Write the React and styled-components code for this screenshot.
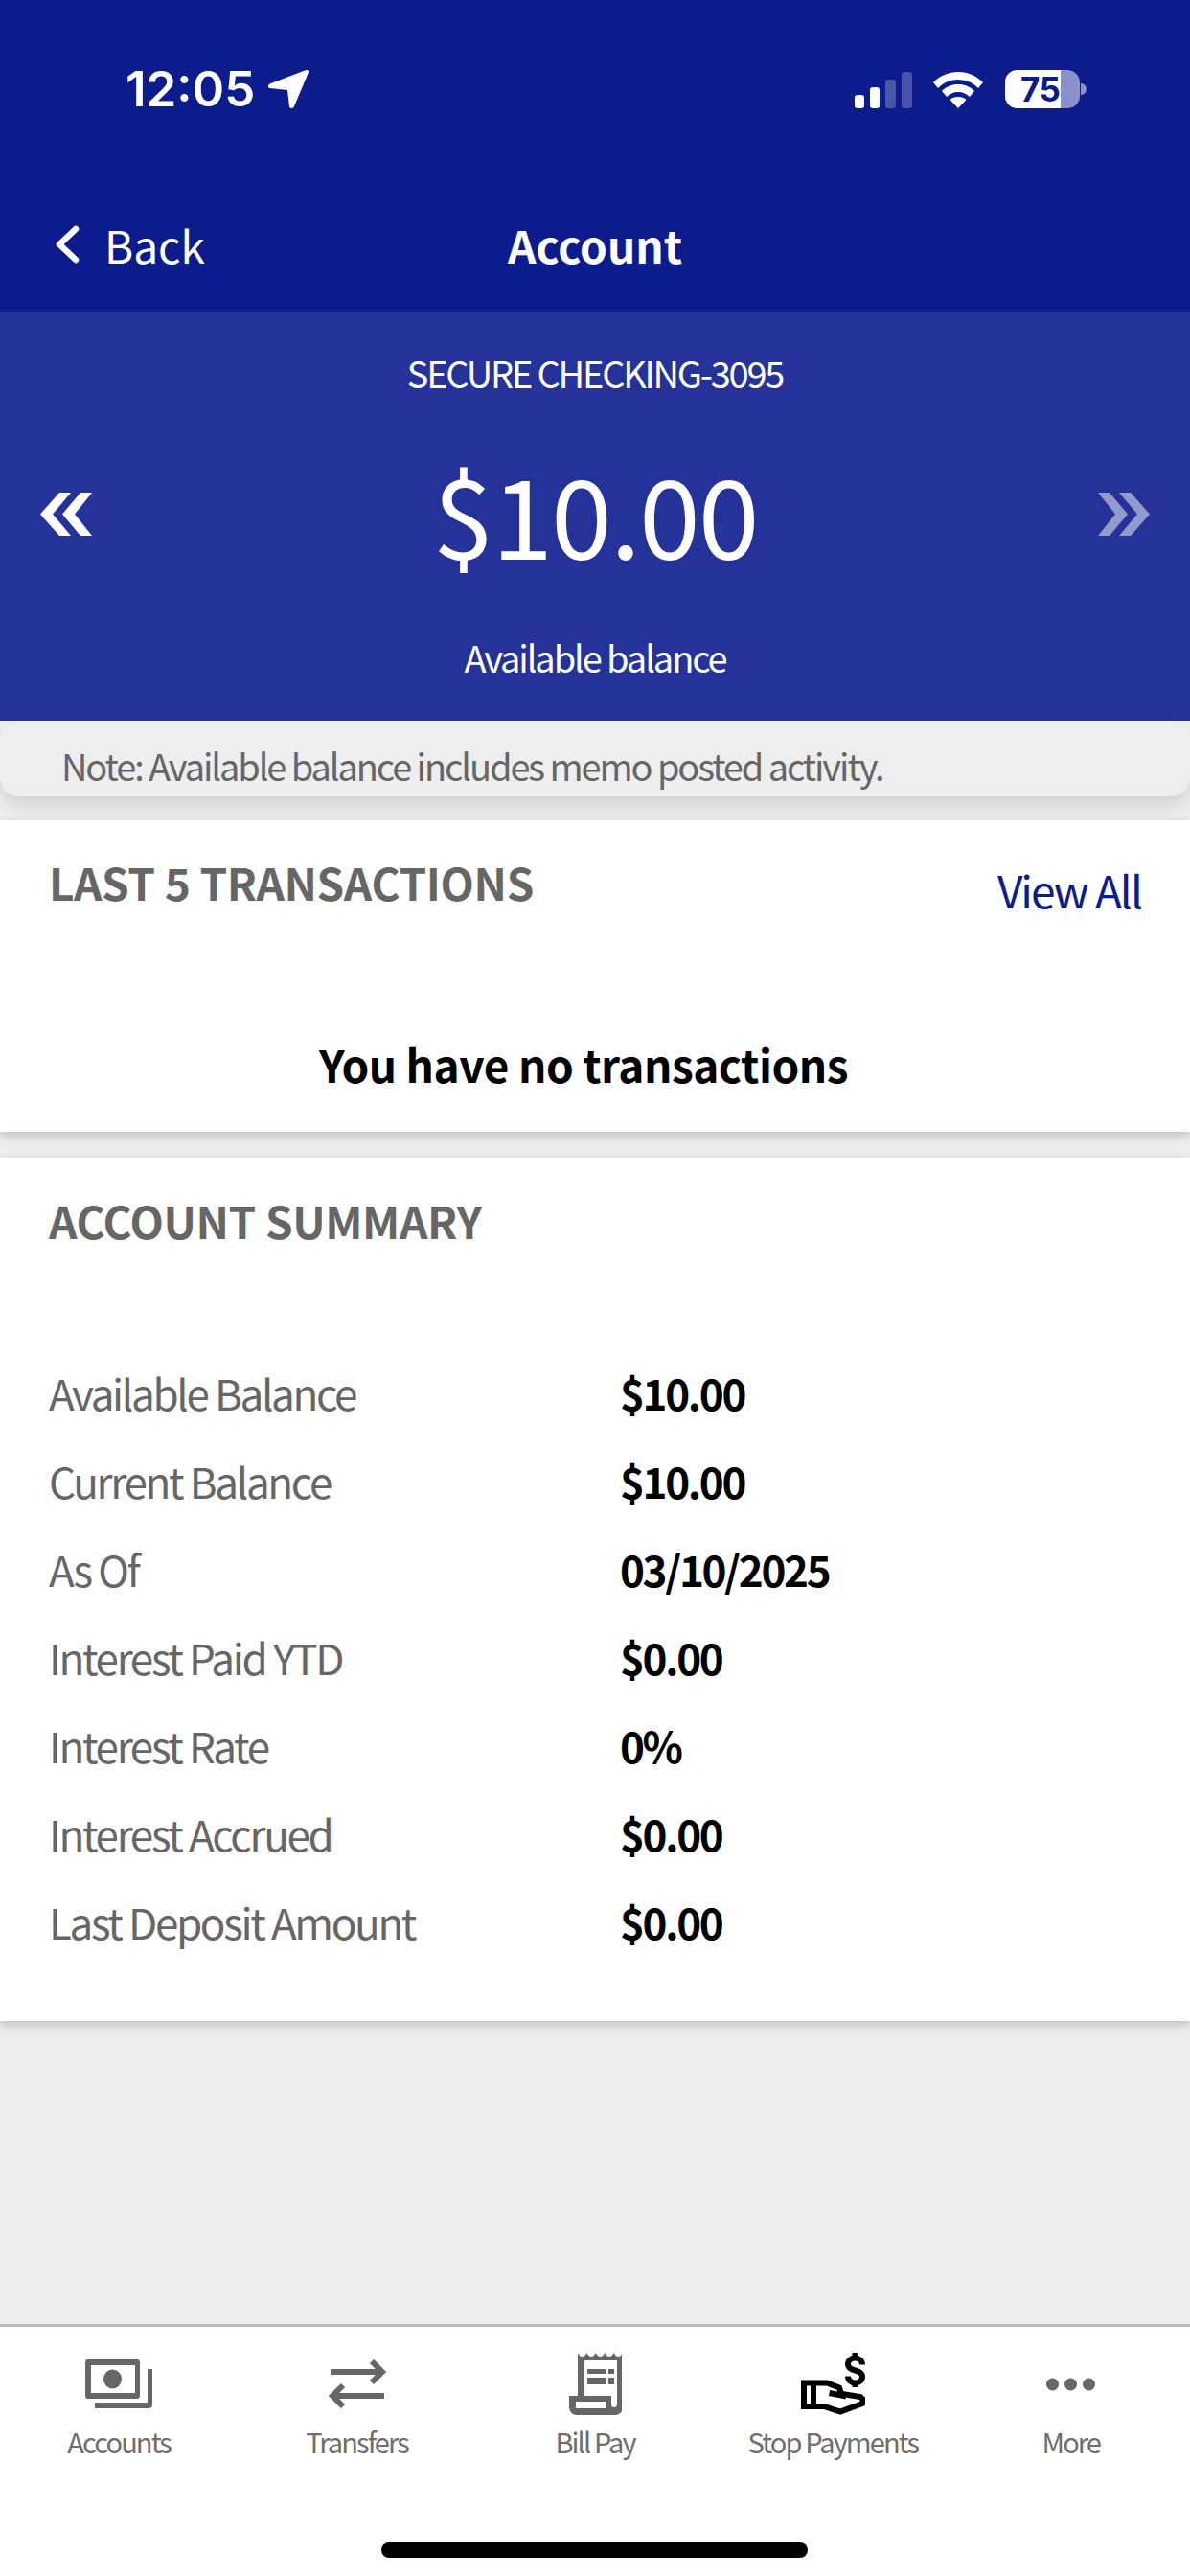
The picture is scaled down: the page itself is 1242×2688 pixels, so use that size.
import React from "react";
import styled, { createGlobalStyle } from "styled-components";

const Global = createGlobalStyle`
  html, body { margin: 0; padding: 0; background: #ededed; }
  * { box-sizing: border-box; }
  body { font-family: "Noto Sans CJK JP", "Noto Sans", sans-serif; }
`;
const Page = styled.div`
  width: 1242px; height: 2688px; display: flex; flex-direction: column; overflow: hidden; background: #ededed;
`;
const Header = styled.header`
  height: 326px; background: #0c1c8c; color: #fff; display: flex; flex-direction: column; flex: none;
`;
const StatusBar = styled.div`
  height: 220px; display: flex; justify-content: space-between; align-items: flex-start; padding: 73px 108px 0 131px;
`;
const StatusLeft = styled.div`display: flex; align-items: center; gap: 14px; height: 40px;`;
const Time = styled.span`font: 600 51px/40px Inter, sans-serif;`;
const StatusRight = styled.div`display: flex; align-items: flex-end; height: 40px;`;
const Battery = styled.div`
  position: relative; width: 78px; height: 40px; margin-left: 23px; border-radius: 13px; overflow: hidden;
  background: #8990cc; display: flex;
`;
const BatteryFill = styled.div`
  width: 58px; height: 100%; background: #fff; color: #0c1c8c; overflow: hidden;
  font: 700 35px/40px Inter, sans-serif; padding-left: 16px; white-space: nowrap; letter-spacing: -.5px;
`;
const BatteryCap = styled.div`
  width: 6px; height: 12px; background: #8990cc; border-radius: 0 6px 6px 0; margin: 0 0 14px 1px;
`;
const Nav = styled.nav`
  display: grid; grid-template-columns: 1fr auto 1fr; align-items: center; height: 70px; padding: 0 57px;
`;
const BackLink = styled.div`display: flex; align-items: center; gap: 26px; font-size: 46px; line-height: 70px; font-weight: 400;`;
const Title = styled.div`font-size: 46px; line-height: 70px; font-weight: 700;`;
const Hero = styled.section`
  height: 426px; flex: none; background: #24329a; color: #fff; display: flex; flex-direction: column; align-items: center;
  position: relative; z-index: 1;
`;
const AccountName = styled.div`font-size: 38px; line-height: 50px; margin-top: 38px; letter-spacing: -2.2px;`;
const AmountRow = styled.div`
  width: 100%; display: flex; justify-content: space-between; align-items: center; padding: 0 42px; height: 130px; margin-top: 55px;
`;
const Amount = styled.div`font-size: 115px; line-height: 130px; font-weight: 400; letter-spacing: -2px;`;
const BalanceLabel = styled.div`font-size: 38px; line-height: 50px; margin-top: 62px; letter-spacing: -2.1px;`;
const Note = styled.div`
  height: 79px; flex: none; background: #eee; border-radius: 20px; color: #666; font-size: 38px; line-height: 71px; padding: 11px 0 0 64px;
  letter-spacing: -2.1px; box-shadow: 0 10px 16px rgba(0,0,0,.1); white-space: nowrap; position: relative; z-index: 1;
`;
const Card = styled.section`
  flex: none; background: #fff; height: ${p => p.$h}px; margin-top: ${p => p.$mt}px; padding: ${p => p.$pt}px 51px 0;
  box-shadow: 0 4px 10px rgba(0,0,0,.2); position: relative; z-index: 2;
`;
const CardHead = styled.div`display: flex; justify-content: space-between; align-items: flex-start;`;
const SectionTitle = styled.h2`
  margin: 0; font-size: 46px; line-height: 64px; font-weight: 700; color: #666; letter-spacing: -.4px;
`;
const ViewAll = styled.a`color: #0c1c8c; font-size: 46px; line-height: 64px; margin-top: 8px; letter-spacing: -2px;`;
const Empty = styled.div`font-size: 46px; line-height: 64px; font-weight: 700; color: #000; text-align: center; margin-top: 118px; padding-right: 24px; letter-spacing: -.5px;`;
const Rows = styled.div`display: flex; flex-direction: column; margin-top: 102px;`;
const Row = styled.div`display: grid; grid-template-columns: 596px 1fr; height: 92px; align-items: center;`;
const Label = styled.span`font-size: 44px; color: #666; letter-spacing: -2.35px;`;
const Value = styled.span`font-size: 44px; font-weight: 700; color: #000; letter-spacing: -2.35px;`;
const Spacer = styled.div`flex: 1;`;
const TabBar = styled.footer`
  height: 263px; flex: none; background: #fff; border-top: 3px solid #b9b9b9; position: relative;
`;
const Tabs = styled.div`display: grid; grid-template-columns: repeat(5, 1fr);`;
const Tab = styled.div`
  display: flex; flex-direction: column; align-items: center; color: #6e6e6e;
`;
const IconBox = styled.div`
  height: 75px; margin-top: 22px; display: flex; align-items: center; justify-content: center;
`;
const TabLabel = styled.span`font-size: 29px; line-height: 44px; white-space: nowrap; letter-spacing: -1.9px;`;
const HomeIndicator = styled.div`
  position: absolute; left: 398px; top: 225px; width: 445px; height: 16px; border-radius: 8px; background: #000;
`;
const DoubleSvg = styled.svg`
  margin-top: 5px; fill: #fff; opacity: ${p => (p.$right ? 0.5 : 1)}; transform: ${p => (p.$right ? "scaleX(-1)" : "none")};
`;
const WifiSvg = styled.svg`margin-left: 22px; fill: #fff;`;

const Signal = () => (
  <svg width="60" height="38" viewBox="0 0 60 38" fill="#fff">
    <rect x="0" y="24" width="10" height="14" rx="3" />
    <rect x="16" y="16" width="10" height="22" rx="3" />
    <rect x="32" y="8" width="11" height="30" rx="3" opacity=".25" />
    <rect x="49" y="0" width="11" height="38" rx="3" opacity=".25" />
  </svg>
);
const Wifi = () => (
  <WifiSvg width="52" height="38" viewBox="0 0 52 38">
    <path d="M26 0C16 0 7 4 0 11l5 6c6-6 13-9 21-9s15 3 21 9l5-6C45 4 36 0 26 0z" />
    <path d="M26 13c-7 0-13 2.700-17 7l5 6c3-3 7-5 12-5s9 2 12 5l5-6c-4-4.300-10-7-17-7z" />
    <path d="M26 26c-4 0-6.500 1.200-8.500 3L26 38l8.500-9c-2-1.800-4.500-3-8.500-3z" />
  </WifiSvg>
);
const Arrow = () => (
  <svg width="42" height="40" viewBox="0 0 42 40" fill="#fff">
    <path d="M40 0c1.500 0 2.300 1 2 2.500L27 38c-1 2.500-4.500 2.500-5 0l-2-17L1.500 19c-2-.3-2-3.500 0-4.500L38 .5c.7-.3 1.300-.5 2-.5z" />
  </svg>
);
const Chevron = () => (
  <svg width="26" height="40" viewBox="0 0 26 40" fill="none" stroke="#fff" strokeWidth="6.500" strokeLinecap="round" strokeLinejoin="round">
    <path d="M22 4 5 20l17 16" />
  </svg>
);
const Doubles = ({ right }) => (
  <DoubleSvg $right={right} width="54" height="45" viewBox="0 0 54 45">
    <path d="M20 0h12L13 22.500 32 45H20L0 22.500z" />
    <path d="M42 0h12L36 22.500 54 45H42L23 22.500z" />
  </DoubleSvg>
);
const AccountsIcon = () => (
  <svg width="70" height="51" viewBox="0 0 70 51" fill="#666">
    <path fillRule="evenodd" d="M3 0h51a3 3 0 0 1 3 3v35a3 3 0 0 1-3 3H3a3 3 0 0 1-3-3V3a3 3 0 0 1 3-3zm3 6v29h46V6z" />
    <ellipse cx="28.500" cy="20.500" rx="9.500" ry="10" />
    <path d="M65 10h5v37a4 4 0 0 1-4 4H10v-6h55z" />
  </svg>
);
const TransfersIcon = () => (
  <svg width="62" height="51" viewBox="0 0 62 51" fill="none" stroke="#666" strokeWidth="6">
    <path d="M3 13h54M46 2l11 11-11 11" />
    <path d="M59 38H5M16 27 5 38l11 11" />
  </svg>
);
const BillIcon = () => (
  <svg width="56" height="65" viewBox="-1 0 56 65" fill="#666">
    <path fillRule="evenodd" d="M9 0q2 4 4.700 4T18.400 0q2 4 4.700 4T27.800 0q2 4 4.700 4T37.200 0q2 4 4.700 4T46.600 0q2 4 4.700 4T56 0v57a8 8 0 0 1-8 8H8a8 8 0 0 1-8-8V45h9zM16 8v37h28v9a3 3 0 0 0 6 0V8zM7 51v7h31v-7z" />
    <path d="M19 17h19v5H19zM41 17h6v5h-6zM19 26h19v7H19zM41 26h6v7h-6z" />
  </svg>
);
const StopIcon = () => (
  <svg width="67" height="65" viewBox="6 9.500 67 65" fill="none" stroke="#000" strokeWidth="6">
    <path d="M9 41h10v24.500H9z" />
    <path d="M21 41h12l13 5 2.500 8-13-2.500" />
    <path d="M21 65.500h9l17 5.500 23-8.500 1-4-3-3-19-3" />
    <path d="M70 22c0-4-3.500-7-7.500-7s-7.500 2.500-7.500 6.500 3.500 5.500 7.500 6.500 7.500 2.500 7.500 6.500-3.500 6.500-7.500 6.500-7.500-3-7.500-7M62.500 9.500v6M62.500 40v5.500" />
  </svg>
);
const MoreIcon = () => (
  <svg width="51" height="14" viewBox="0 0 51 14" fill="#666">
    <circle cx="6.500" cy="7" r="6.500" /><circle cx="25.500" cy="7" r="6.500" /><circle cx="44.500" cy="7" r="6.500" />
  </svg>
);

const rows = [
  ["Available Balance", "$10.00"],
  ["Current Balance", "$10.00"],
  ["As Of", "03/10/2025"],
  ["Interest Paid YTD", "$0.00"],
  ["Interest Rate", "0%"],
  ["Interest Accrued", "$0.00"],
  ["Last Deposit Amount", "$0.00"],
];
const tabs = [
  ["Accounts", <AccountsIcon />],
  ["Transfers", <TransfersIcon />],
  ["Bill Pay", <BillIcon />],
  ["Stop Payments", <StopIcon />],
  ["More", <MoreIcon />],
];

export default function App() {
  return (
    <Page>
      <Global />
      <Header>
        <StatusBar>
          <StatusLeft><Time>12:05</Time><Arrow /></StatusLeft>
          <StatusRight>
            <Signal /><Wifi />
            <Battery><BatteryFill>75</BatteryFill></Battery>
            <BatteryCap />
          </StatusRight>
        </StatusBar>
        <Nav>
          <BackLink><Chevron />Back</BackLink>
          <Title>Account</Title>
        </Nav>
      </Header>
      <Hero>
        <AccountName>SECURE CHECKING-3095</AccountName>
        <AmountRow>
          <Doubles />
          <Amount>$10.00</Amount>
          <Doubles right />
        </AmountRow>
        <BalanceLabel>Available balance</BalanceLabel>
      </Hero>
      <Note>Note: Available balance includes memo posted activity.</Note>
      <Card $h={325} $mt={25} $pt={32}>
        <CardHead>
          <SectionTitle>LAST 5 TRANSACTIONS</SectionTitle>
          <ViewAll>View All</ViewAll>
        </CardHead>
        <Empty>You have no transactions</Empty>
      </Card>
      <Card $h={901} $mt={27} $pt={33}>
        <SectionTitle>ACCOUNT SUMMARY</SectionTitle>
        <Rows>
          {rows.map(([l, v]) => (
            <Row key={l}><Label>{l}</Label><Value>{v}</Value></Row>
          ))}
        </Rows>
      </Card>
      <Spacer />
      <TabBar>
        <Tabs>
          {tabs.map(([l, i]) => (
            <Tab key={l}>
              <IconBox>{i}</IconBox>
              <TabLabel>{l}</TabLabel>
            </Tab>
          ))}
        </Tabs>
        <HomeIndicator />
      </TabBar>
    </Page>
  );
}
